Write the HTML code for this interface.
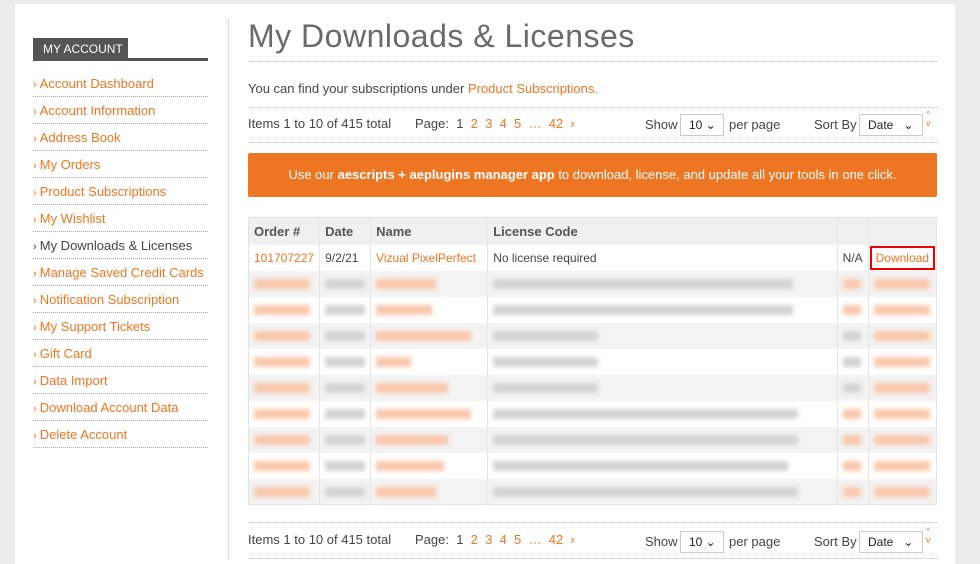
<!DOCTYPE html>
<html><head><meta charset="utf-8"><style>
*{margin:0;padding:0;box-sizing:border-box}
body{width:980px;height:560px;overflow:hidden;background:#ececec;font-family:"Liberation Sans",sans-serif;font-size:13px;color:#444;position:relative}
.panel{position:absolute;left:15px;top:4px;width:940px;height:560px;background:#fff}
.a{color:#ee7623}
.hdr{position:absolute;left:33px;top:38px;width:95px;height:22px;background:#555;color:#fff;font-size:12px;line-height:22px;padding-left:10px}
.hline{position:absolute;left:33px;top:58px;width:175px;height:3px;background:#555}
.side{position:absolute;left:33px;top:70px;width:175px}
.side div{height:27px;line-height:27px;border-bottom:1px dotted #aaa;color:#ee7623;font-size:13px}
.side div:before{content:"› ";font-size:11px}
.side div.cur{color:#444}
.vline{position:absolute;left:228px;top:20px;height:540px;border-left:1px dotted #bbb}
h1{position:absolute;left:248px;top:18px;font-weight:normal;font-size:32px;color:#6a6a6a;letter-spacing:.5px}
.dl{position:absolute;left:248px;width:689px;border-top:1px dotted #bbb}
.t{position:absolute;white-space:nowrap}
.sel{position:absolute;height:22px;border:1px solid #ccc;background:#fff;font-size:12px;line-height:20px;padding-left:8px;color:#222}
.banner{position:absolute;left:248px;top:153px;width:689px;height:44px;background:#ee7623;color:#fff;text-align:center;line-height:44px;font-size:13px;border-radius:2px}
table{position:absolute;left:248px;top:217px;width:689px;border-collapse:collapse;border:1px solid #e2e2e2;font-size:12px}
td,th{border-right:1px solid #e6e6e6;height:26px;padding:0 5px;text-align:left;white-space:nowrap}
th{background:#f0f0f0;font-weight:bold;color:#555;height:27px;font-size:13px}
tr:nth-child(odd) td{background:#f3f3f3}
.b{display:inline-block;height:10px;filter:blur(2px);vertical-align:middle}
.o{background:#f9c8ad}.g{background:#d4d4d4}
</style></head><body>
<div class="panel"></div>
<div class="hdr">MY ACCOUNT</div><div class="hline"></div>
<div class="side">
<div>Account Dashboard</div><div>Account Information</div><div>Address Book</div><div>My Orders</div><div>Product Subscriptions</div><div>My Wishlist</div><div class="cur">My Downloads &amp; Licenses</div><div>Manage Saved Credit Cards</div><div>Notification Subscription</div><div>My Support Tickets</div><div>Gift Card</div><div>Data Import</div><div>Download Account Data</div><div>Delete Account</div>
</div>
<div class="vline"></div>
<h1>My Downloads &amp; Licenses</h1>
<div class="dl" style="top:61px"></div>
<div class="t" style="left:248px;top:81px">You can find your subscriptions under <span class="a">Product Subscriptions.</span></div>
<div class="dl" style="top:107px"></div>
<div class="t" style="left:248px;top:116px">Items 1 to 10 of 415 total</div>
<div class="t" style="left:415px;top:116px">Page:&nbsp; 1 &nbsp;<span class="a">2 &nbsp;3 &nbsp;4 &nbsp;5 &nbsp;… &nbsp;42 &nbsp;›</span></div>
<div class="t" style="left:645px;top:117px">Show</div><div class="sel" style="left:680px;top:114px;width:44px">10 ⌄</div><div class="t" style="left:729px;top:117px">per page</div>
<div class="t" style="left:814px;top:117px">Sort By</div><div class="sel" style="left:859px;top:114px;width:64px">Date &nbsp;&nbsp;⌄</div>
<div class="t" style="left:926px;top:110px;font-size:9px;color:#999;line-height:9px">^<br><span class="a">v</span></div>
<div class="dl" style="top:142px"></div>
<div class="banner">Use our <b>aescripts + aeplugins manager app</b> to download, license, and update all your tools in one click.</div>
<table>
<tr><th style="width:68px">Order #</th><th style="width:50px">Date</th><th style="width:118px">Name</th><th style="width:354px">License Code</th><th style="width:29px"></th><th></th></tr>
<tr><td class="a">101707227</td><td>9/2/21</td><td class="a">Vizual PixelPerfect</td><td>No license required</td><td>N/A</td><td style="padding:0 2px"><span class="a" style="display:block;border:2px solid #e00;padding:3px 4px;margin:0 -1px">Download</span></td></tr>
<tr><td><span class="b o" style="width:56px"></span></td><td><span class="b g" style="width:40px"></span></td><td><span class="b o" style="width:60px"></span></td><td><span class="b g" style="width:300px"></span></td><td><span class="b o" style="width:18px"></span></td><td><span class="b o" style="width:56px"></span></td></tr>
<tr><td><span class="b o" style="width:56px"></span></td><td><span class="b g" style="width:40px"></span></td><td><span class="b o" style="width:56px"></span></td><td><span class="b g" style="width:300px"></span></td><td><span class="b o" style="width:18px"></span></td><td><span class="b o" style="width:56px"></span></td></tr>
<tr><td><span class="b o" style="width:56px"></span></td><td><span class="b g" style="width:40px"></span></td><td><span class="b o" style="width:95px"></span></td><td><span class="b g" style="width:105px"></span></td><td><span class="b g" style="width:18px"></span></td><td><span class="b o" style="width:56px"></span></td></tr>
<tr><td><span class="b o" style="width:56px"></span></td><td><span class="b g" style="width:40px"></span></td><td><span class="b o" style="width:35px"></span></td><td><span class="b g" style="width:105px"></span></td><td><span class="b g" style="width:18px"></span></td><td><span class="b o" style="width:56px"></span></td></tr>
<tr><td><span class="b o" style="width:56px"></span></td><td><span class="b g" style="width:40px"></span></td><td><span class="b o" style="width:72px"></span></td><td><span class="b g" style="width:105px"></span></td><td><span class="b g" style="width:18px"></span></td><td><span class="b o" style="width:56px"></span></td></tr>
<tr><td><span class="b o" style="width:56px"></span></td><td><span class="b g" style="width:40px"></span></td><td><span class="b o" style="width:95px"></span></td><td><span class="b g" style="width:305px"></span></td><td><span class="b o" style="width:18px"></span></td><td><span class="b o" style="width:56px"></span></td></tr>
<tr><td><span class="b o" style="width:56px"></span></td><td><span class="b g" style="width:40px"></span></td><td><span class="b o" style="width:72px"></span></td><td><span class="b g" style="width:305px"></span></td><td><span class="b o" style="width:18px"></span></td><td><span class="b o" style="width:56px"></span></td></tr>
<tr><td><span class="b o" style="width:56px"></span></td><td><span class="b g" style="width:40px"></span></td><td><span class="b o" style="width:68px"></span></td><td><span class="b g" style="width:295px"></span></td><td><span class="b o" style="width:18px"></span></td><td><span class="b o" style="width:56px"></span></td></tr>
<tr><td><span class="b o" style="width:56px"></span></td><td><span class="b g" style="width:40px"></span></td><td><span class="b o" style="width:60px"></span></td><td><span class="b g" style="width:305px"></span></td><td><span class="b o" style="width:18px"></span></td><td><span class="b o" style="width:56px"></span></td></tr>
</table>
<div class="dl" style="top:522px"></div>
<div class="t" style="left:248px;top:532px">Items 1 to 10 of 415 total</div>
<div class="t" style="left:415px;top:532px">Page:&nbsp; 1 &nbsp;<span class="a">2 &nbsp;3 &nbsp;4 &nbsp;5 &nbsp;… &nbsp;42 &nbsp;›</span></div>
<div class="t" style="left:645px;top:534px">Show</div><div class="sel" style="left:680px;top:531px;width:44px">10 ⌄</div><div class="t" style="left:729px;top:534px">per page</div>
<div class="t" style="left:814px;top:534px">Sort By</div><div class="sel" style="left:859px;top:531px;width:64px">Date &nbsp;&nbsp;⌄</div>
<div class="t" style="left:926px;top:527px;font-size:9px;color:#999;line-height:9px">^<br><span class="a">v</span></div>
<div class="dl" style="top:558px"></div>
</body></html>
